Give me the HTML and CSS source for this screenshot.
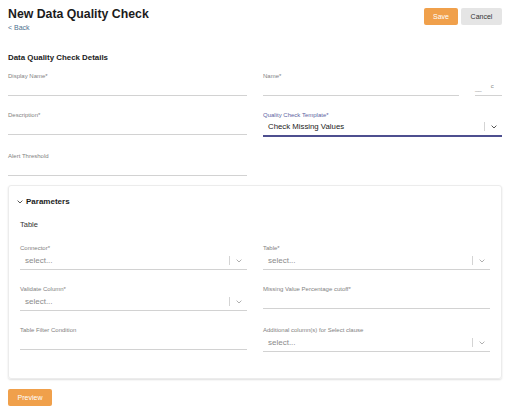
FILE: index.html
```html
<!DOCTYPE html>
<html>
<head>
<meta charset="utf-8">
<link rel="stylesheet" href="styles.css">
</head>
<body>
<div class="page">
  <div class="header">
    <div>
      <h1 class="title">New Data Quality Check</h1>
      <a class="back" href="#">&lt; Back</a>
    </div>
    <div class="actions">
      <button class="btn btn-primary">Save</button>
      <button class="btn btn-secondary">Cancel</button>
    </div>
  </div>

  <h2 class="section-title">Data Quality Check Details</h2>

  <div class="grid">
    <div class="field">
      <span class="label">Display Name*</span>
      <div class="input"></div>
    </div>
    <div class="name-row">
      <div class="field grow">
        <span class="label">Name*</span>
        <div class="input"></div>
      </div>
      <div class="suffix"><span class="suffix-us">__</span><span class="suffix-c">c</span></div>
    </div>

    <div class="field">
      <span class="label">Description*</span>
      <div class="input"></div>
    </div>
    <div class="field">
      <span class="label label-active">Quality Check Template*</span>
      <div class="select select-active">
        <span class="select-value">Check Missing Values</span>
        <span class="sep"></span>
        <span class="chev"><svg width="6" height="4" viewBox="0 0 6 4"><polyline points="0.6,0.6 3,3 5.4,0.6" fill="none" stroke="#555" stroke-width="1"/></svg></span>
      </div>
    </div>

    <div class="field">
      <span class="label">Alert Threshold</span>
      <div class="input"></div>
    </div>
  </div>

  <div class="card">
    <div class="card-header">
      <svg width="6" height="4" viewBox="0 0 6 4"><polyline points="0.6,0.6 3,3 5.4,0.6" fill="none" stroke="#444" stroke-width="0.9"/></svg>
      <span>Parameters</span>
    </div>
    <div class="subhead">Table</div>

    <div class="grid inner">
      <div class="field">
        <span class="label">Connector*</span>
        <div class="select">
          <span class="placeholder">select...</span>
          <span class="sep"></span>
          <span class="chev"><svg width="6" height="4" viewBox="0 0 6 4"><polyline points="0.6,0.6 3,3 5.4,0.6" fill="none" stroke="#b0b0b0" stroke-width="1"/></svg></span>
        </div>
      </div>
      <div class="field">
        <span class="label">Table*</span>
        <div class="select">
          <span class="placeholder">select...</span>
          <span class="sep"></span>
          <span class="chev"><svg width="6" height="4" viewBox="0 0 6 4"><polyline points="0.6,0.6 3,3 5.4,0.6" fill="none" stroke="#b0b0b0" stroke-width="1"/></svg></span>
        </div>
      </div>

      <div class="field">
        <span class="label">Validate Column*</span>
        <div class="select">
          <span class="placeholder">select...</span>
          <span class="sep"></span>
          <span class="chev"><svg width="6" height="4" viewBox="0 0 6 4"><polyline points="0.6,0.6 3,3 5.4,0.6" fill="none" stroke="#b0b0b0" stroke-width="1"/></svg></span>
        </div>
      </div>
      <div class="field">
        <span class="label">Missing Value Percentage cutoff*</span>
        <div class="input"></div>
      </div>

      <div class="field">
        <span class="label">Table Filter Condition</span>
        <div class="input"></div>
      </div>
      <div class="field">
        <span class="label">Additional column(s) for Select clause</span>
        <div class="select">
          <span class="placeholder">select...</span>
          <span class="sep"></span>
          <span class="chev"><svg width="6" height="4" viewBox="0 0 6 4"><polyline points="0.6,0.6 3,3 5.4,0.6" fill="none" stroke="#b0b0b0" stroke-width="1"/></svg></span>
        </div>
      </div>
    </div>
  </div>

  <button class="btn btn-primary btn-preview">Preview</button>
</div>
</body>
</html>
```

FILE: styles.css
```css
* { box-sizing: border-box; }

body {
  margin: 0;
  background: #fff;
  color: #222;
  font-family: "Liberation Sans", Arial, sans-serif;
}

.page {
  padding: 7px 10px 0 8px;
}

.header {
  display: flex;
  justify-content: space-between;
  align-items: flex-start;
}

.title {
  margin: 0;
  font-size: 12.3px;
  line-height: 14px;
  font-weight: bold;
  color: #1b1b1b;
}

.back {
  display: block;
  margin-top: 2px;
  font-size: 7px;
  line-height: 9px;
  color: #4d6f8f;
  text-decoration: none;
}

.actions {
  display: flex;
  gap: 3px;
  margin-top: 1px;
}

.btn {
  height: 17px;
  padding: 0;
  border: 0;
  border-radius: 2px;
  font-family: inherit;
  font-size: 7px;
}

.btn-primary {
  width: 34px;
  background: #f0a04b;
  color: #fff;
}

.btn-secondary {
  width: 41px;
  background: #e5e5e5;
  color: #333;
}

.section-title {
  margin: 21px 0 0;
  font-size: 7.9px;
  line-height: 10px;
  font-weight: bold;
  color: #1b1b1b;
}

.grid {
  display: grid;
  grid-template-columns: 1fr 1fr;
  column-gap: 16px;
  row-gap: 15px;
  align-items: start;
  margin-top: 8.6px;
}

.field {
  display: flex;
  flex-direction: column;
}

.grow { flex: 1; }

.label {
  display: block;
  font-size: 6px;
  line-height: 8px;
  color: #828282;
  white-space: nowrap;
}

.label-active { color: #5c5f9f; }

.input {
  height: 16px;
  border-bottom: 1px solid #d2d2d2;
}

.name-row {
  display: flex;
  gap: 16px;
  align-items: flex-end;
}

.suffix {
  width: 27px;
  height: 16px;
  display: flex;
  align-items: flex-end;
  padding-bottom: 2px;
  border-bottom: 1px solid #d2d2d2;
  font-size: 6px;
  line-height: 8px;
  color: #888;
}

.suffix-c {
  margin-left: 9px;
  margin-bottom: 3px;
}

.select {
  display: flex;
  align-items: center;
  height: 18px;
  padding-left: 5px;
  border-bottom: 1px solid #d2d2d2;
}

.select-active {
  border-bottom: 2px solid #4d4f8f;
}

.select-value {
  flex: 1;
  font-size: 7.8px;
  color: #222;
}

.placeholder {
  flex: 1;
  font-size: 8px;
  color: #8a8a8a;
}

.sep {
  width: 1px;
  height: 9px;
  background: #d4d4d4;
}

.chev {
  width: 17px;
  display: flex;
  justify-content: center;
  align-items: center;
}

.card {
  margin-top: 9px;
  padding: 11px 11px 26px;
  border: 1px solid #ececec;
  border-radius: 3px;
  box-shadow: 0 1px 2px rgba(0, 0, 0, 0.13);
}

.card-header {
  display: flex;
  align-items: center;
  gap: 3px;
  margin-left: -3px;
  font-size: 8px;
  line-height: 10px;
  font-weight: bold;
  color: #1b1b1b;
}

.subhead {
  margin-top: 13.6px;
  font-size: 7.5px;
  line-height: 9px;
  color: #333;
}

.grid.inner {
  margin-top: 15px;
}

.btn-preview {
  display: block;
  width: 44px;
  margin-top: 10px;
}
```
